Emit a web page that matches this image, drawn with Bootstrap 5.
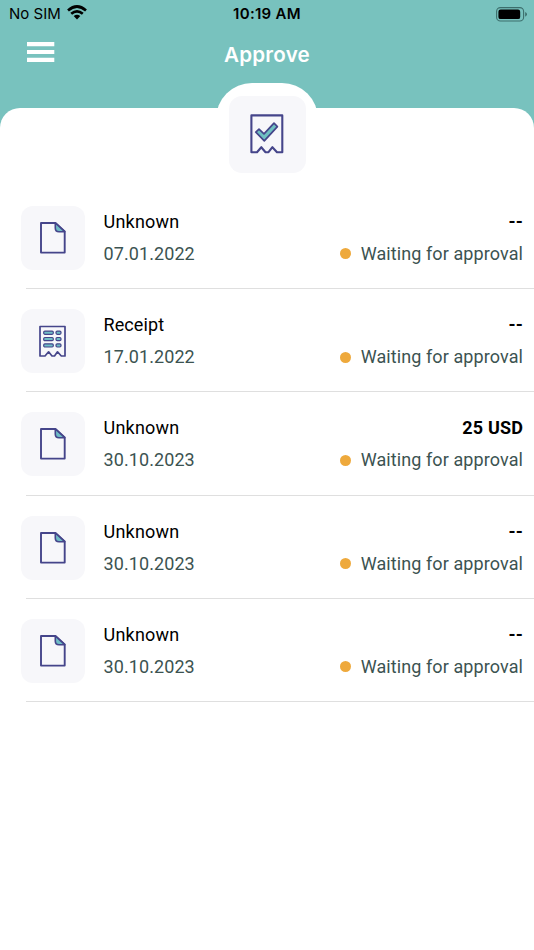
<!DOCTYPE html>
<html lang="en">
<head>
<meta charset="utf-8">
<meta name="viewport" content="width=device-width, initial-scale=1">
<title>Approve</title>
<link href="https://cdn.jsdelivr.net/npm/bootstrap@5.3.0/dist/css/bootstrap.min.css" rel="stylesheet">
<style>
body { font-family: Roboto, sans-serif; background: #fff; color: #000; overflow: hidden; }
.app-head { background: #78c2be; height: 130px; font-family: Inter, sans-serif; }
.status { height: 28px; padding: 0 7px 0 9px; font-size: 15px; line-height: 28px; }
.status > * { flex: 1 1 0; }
.wifi { margin: -3px 0 0 6px; }
.clock { font-weight: 600; font-size: 15px; letter-spacing: .3px; margin-left: -2px; }
.titlebar { height: 54px; padding: 0 27px; }
.titlebar > * { flex: 1 1 0; }
.menu-btn { line-height: 0; margin-top: -6px; }
.page-title { color: #fff; font-size: 20.6px; font-weight: 600; letter-spacing: .2px; }
.sheet { margin-top: -22px; border-radius: 20px 20px 0 0; background: #fff; height: 842px; }
.bump { width: 102px; height: 102.8px; margin-top: -25px; border-radius: 36px; background: #fff; }
.bump-tile { width: 77px; height: 77px; margin-top: 12.5px; border-radius: 13px; background: #f7f7fa; }
.bump-tile svg { margin-left: -1px; }
.doc-row { height: 103.25px; margin-left: 26px; padding: 1.8px 11px 0 0; border-bottom: 1px solid #dfdfdf; }
.doc-tile { width: 64px; height: 64px; margin-left: -5px; margin-right: 18.5px; border-radius: 12px; background: #f7f7fa; }
.doc-tile svg { margin-left: -1px; }
.doc-text { font-size: 18px; line-height: 32px; letter-spacing: .09px; }
.muted-line { color: #3c5351; }
.doc-name { letter-spacing: .22px; }
.amount { font-weight: 700; letter-spacing: .15px; }
.dot { width: 11px; height: 11px; margin-right: 10px; border-radius: 50%; background: #eea93c; flex-shrink: 0; }
</style>
<script src="https://cdn.jsdelivr.net/npm/bootstrap@5.3.0/dist/js/bootstrap.bundle.min.js"></script>
</head>
<body>
<svg class="d-none" xmlns="http://www.w3.org/2000/svg">
  <symbol id="doc" viewBox="0 0 26 32">
    <path d="M1 1H15.5L24.7 9.5V30.6H1Z" fill="none" stroke="#45458a" stroke-width="1.9" stroke-linejoin="round"/>
    <path d="M15.3 1L24.7 9.7H19Q15.3 9.7 15.3 6Z" fill="#6fbdc6" stroke="#45458a" stroke-width="1.6" stroke-linejoin="round"/>
  </symbol>
  <symbol id="receipt" viewBox="0 0 27 32">
    <path d="M1 1.5H26V31H22.3L18.5 26.8L15.5 31H13L9.6 26.8L6 31H1Z" fill="none" stroke="#45458a" stroke-width="1.7" stroke-linejoin="round"/>
    <g fill="#6fbdc6" stroke="#45458a" stroke-width="1.2">
      <rect x="4.7" y="6.1" width="9.6" height="3.2" rx="1.2"/><rect x="17" y="6.1" width="5" height="3.2" rx="1.2"/>
      <rect x="4.7" y="12.5" width="9.6" height="3.2" rx="1.2"/><rect x="17" y="12.5" width="5" height="3.2" rx="1.2"/>
      <rect x="4.7" y="18.8" width="9.6" height="3.2" rx="1.2"/><rect x="17" y="18.8" width="5" height="3.2" rx="1.2"/>
    </g>
  </symbol>
</svg>

<header class="app-head">
  <div class="status d-flex align-items-center text-black">
    <div class="d-flex align-items-center">No SIM
      <svg class="wifi" width="20" height="15" viewBox="0 0 20 15">
        <g fill="none" stroke="#000" stroke-width="2.7"><path d="M1 5.4Q10-2.4 19 5.4"/><path d="M4.2 8.8Q10 3.9 15.8 8.8"/></g>
        <path d="M6.7 11.1Q10 8.3 13.3 11.1L10 14.6Z"/>
      </svg>
    </div>
    <div class="clock text-center">10:19 AM</div>
    <div class="d-flex justify-content-end">
      <svg width="31" height="15" viewBox="0 0 31 15">
        <rect x=".6" y=".6" width="27" height="13.4" rx="3.8" fill="none" stroke="#3c6e6c" stroke-width="1.1"/>
        <rect x="2.4" y="2.5" width="21.8" height="9.6" rx="2.2"/>
        <path d="M29.2 5Q31 6 31 7.3T29.2 9.7Z" fill="#3c6e6c"/>
      </svg>
    </div>
  </div>
  <div class="titlebar d-flex align-items-center">
    <div class="menu-btn"><svg width="28" height="20" viewBox="0 0 28 20" fill="#fff"><path d="M0 0H27.3V4.2H0ZM0 8H27.3V12H0ZM0 15.8H27.3V20H0Z"/></svg></div>
    <div class="page-title text-center">Approve</div>
    <div></div>
  </div>
</header>

<main class="sheet d-flex flex-column">
  <div class="bump d-flex justify-content-center align-self-center flex-shrink-0">
    <div class="bump-tile d-flex align-items-center justify-content-center">
      <svg width="34" height="40" viewBox="0 0 34 40">
        <path d="M1.4 1.4H32.3V38.2H27L22.4 33.2L18.5 38.2H15.5L11.3 33.2L7 38.2H1.4Z" fill="none" stroke="#45458a" stroke-width="2.1" stroke-linejoin="round"/>
        <path d="M5.8 18.2L9 15.2L14 19.8L24 9.2L27.4 12.6L14.3 26.8Z" fill="#6fc0c2" stroke="#45458a" stroke-width="1.7" stroke-linejoin="round"/>
      </svg>
    </div>
  </div>

  <div class="doc-row d-flex align-items-center flex-shrink-0">
    <div class="doc-tile d-flex align-items-center justify-content-center flex-shrink-0"><svg width="26" height="32"><use href="#doc"/></svg></div>
    <div class="doc-text flex-grow-1">
      <div class="d-flex justify-content-between"><span class="doc-name">Unknown</span><span class="amount">--</span></div>
      <div class="d-flex align-items-center muted-line"><span class="me-auto">07.01.2022</span><span class="dot"></span><span>Waiting for approval</span></div>
    </div>
  </div>
  <div class="doc-row d-flex align-items-center flex-shrink-0">
    <div class="doc-tile d-flex align-items-center justify-content-center flex-shrink-0"><svg width="27" height="32"><use href="#receipt"/></svg></div>
    <div class="doc-text flex-grow-1">
      <div class="d-flex justify-content-between"><span>Receipt</span><span class="amount">--</span></div>
      <div class="d-flex align-items-center muted-line"><span class="me-auto">17.01.2022</span><span class="dot"></span><span>Waiting for approval</span></div>
    </div>
  </div>
  <div class="doc-row d-flex align-items-center flex-shrink-0">
    <div class="doc-tile d-flex align-items-center justify-content-center flex-shrink-0"><svg width="26" height="32"><use href="#doc"/></svg></div>
    <div class="doc-text flex-grow-1">
      <div class="d-flex justify-content-between"><span class="doc-name">Unknown</span><span class="amount">25 USD</span></div>
      <div class="d-flex align-items-center muted-line"><span class="me-auto">30.10.2023</span><span class="dot"></span><span>Waiting for approval</span></div>
    </div>
  </div>
  <div class="doc-row d-flex align-items-center flex-shrink-0">
    <div class="doc-tile d-flex align-items-center justify-content-center flex-shrink-0"><svg width="26" height="32"><use href="#doc"/></svg></div>
    <div class="doc-text flex-grow-1">
      <div class="d-flex justify-content-between"><span class="doc-name">Unknown</span><span class="amount">--</span></div>
      <div class="d-flex align-items-center muted-line"><span class="me-auto">30.10.2023</span><span class="dot"></span><span>Waiting for approval</span></div>
    </div>
  </div>
  <div class="doc-row d-flex align-items-center flex-shrink-0">
    <div class="doc-tile d-flex align-items-center justify-content-center flex-shrink-0"><svg width="26" height="32"><use href="#doc"/></svg></div>
    <div class="doc-text flex-grow-1">
      <div class="d-flex justify-content-between"><span class="doc-name">Unknown</span><span class="amount">--</span></div>
      <div class="d-flex align-items-center muted-line"><span class="me-auto">30.10.2023</span><span class="dot"></span><span>Waiting for approval</span></div>
    </div>
  </div>
</main>
</body>
</html>
